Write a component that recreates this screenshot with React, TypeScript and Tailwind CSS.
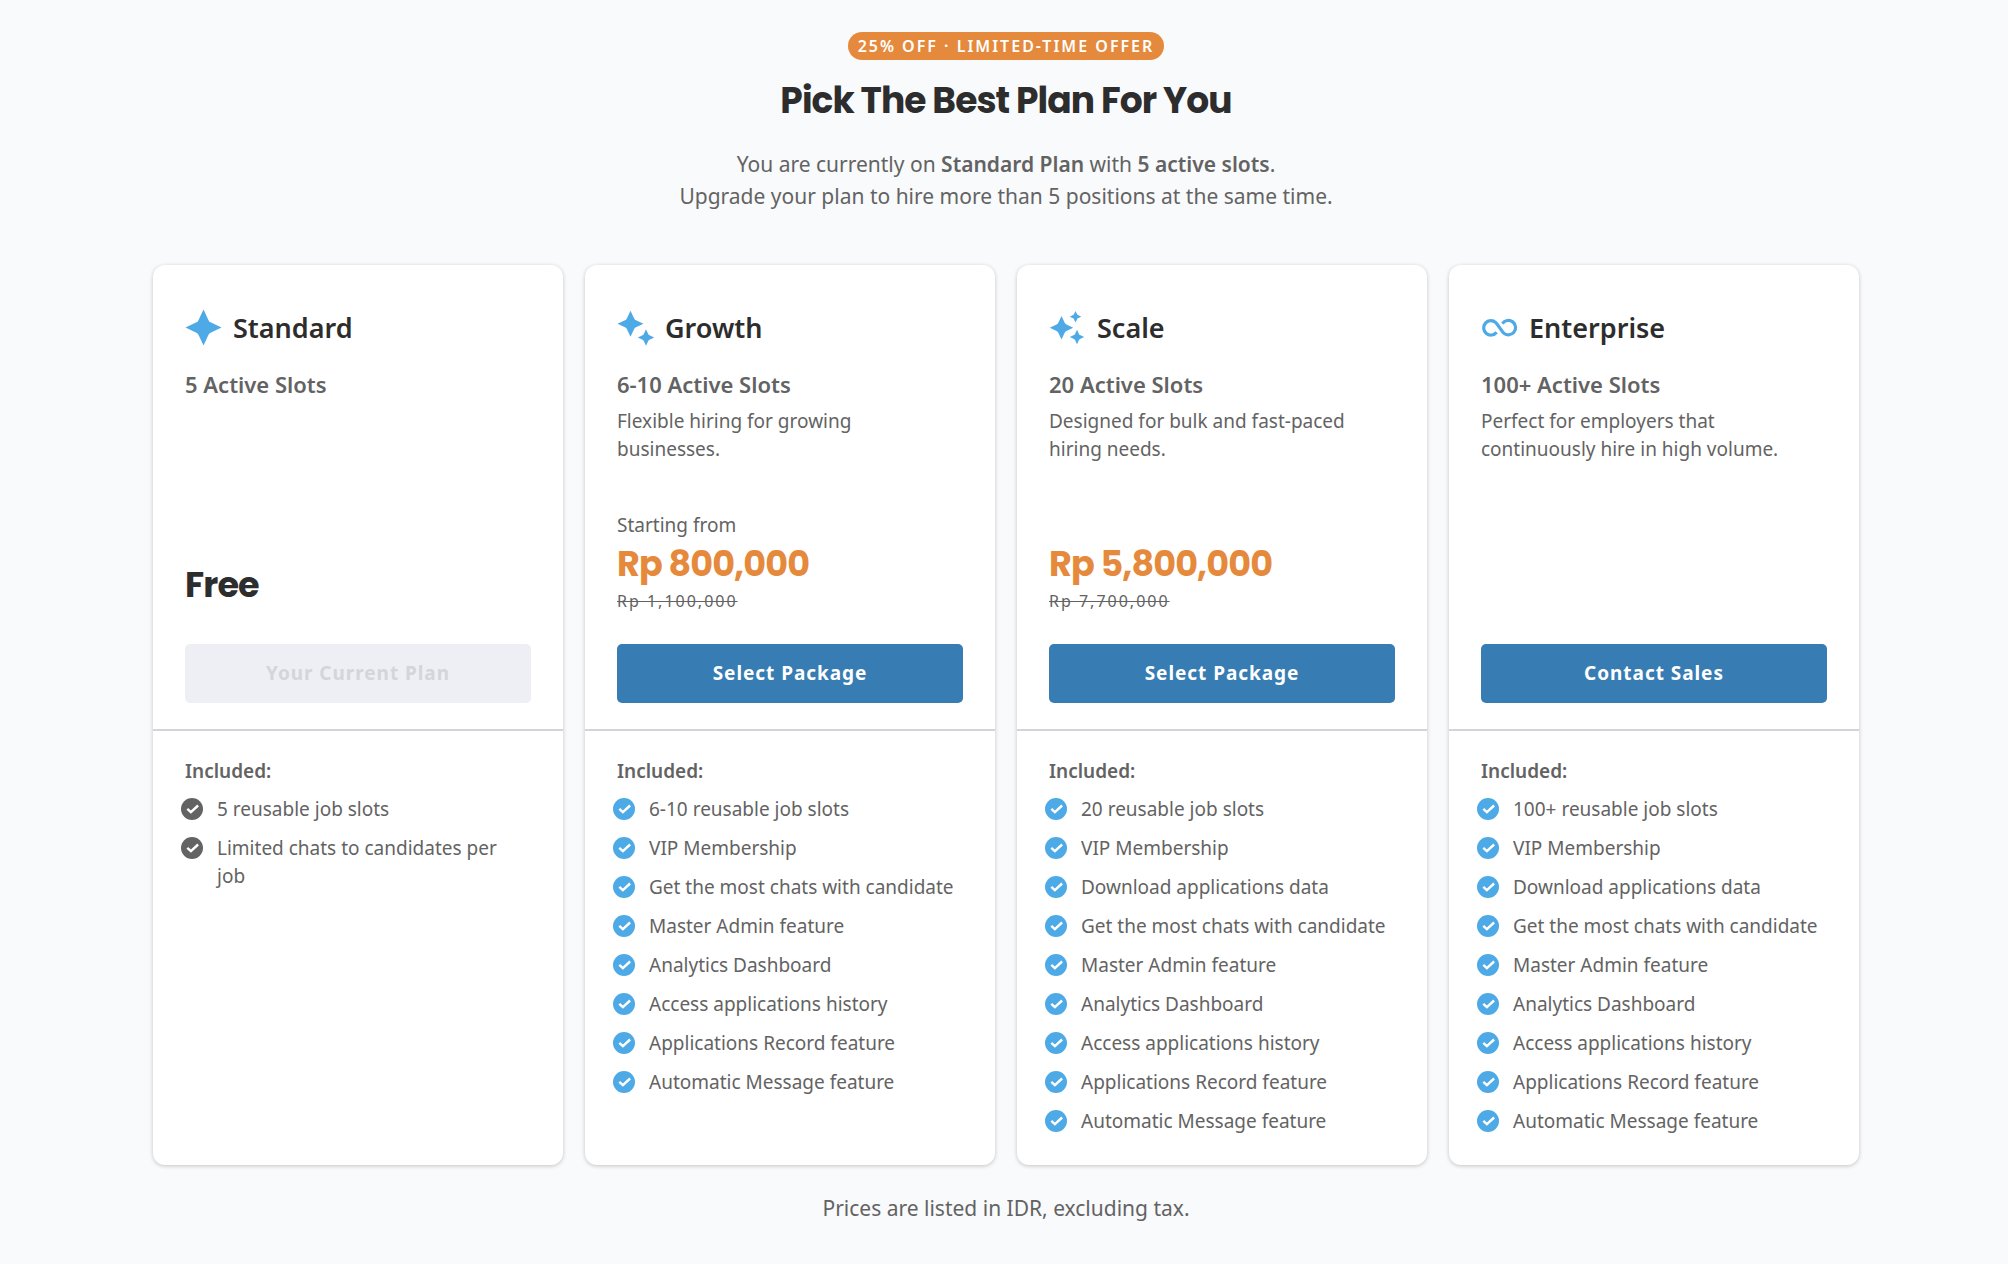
import type { ReactNode } from "react";

type StarProps = { cx: number; cy: number; r: number };

function Star({ cx, cy, r }: StarProps) {
  return (
    <path
      transform={`translate(${cx} ${cy}) scale(${r / 18})`}
      d="M0-18 4.9-7.6Q5.6-5.6 7.6-4.9L18 0 7.6 4.9Q5.6 5.6 4.9 7.6L0 18-4.9 7.6Q-5.6 5.6-7.6 4.9L-18 0-7.6-4.9Q-5.6-5.6-4.9-7.6Z"
    />
  );
}

function PlanIcon({ children }: { children: ReactNode }) {
  return (
    <svg viewBox="0 0 36 36" className="size-9 shrink-0 overflow-visible fill-[#4eaae6]" aria-hidden="true">
      {children}
    </svg>
  );
}

function CheckBadge({ muted }: { muted?: boolean }) {
  return (
    <svg
      viewBox="0 0 22 22"
      className={muted ? "size-[22px] fill-[#636363]" : "size-[22px] fill-[#4eaae6]"}
      aria-hidden="true"
    >
      <circle cx="11" cy="11" r="11" />
      <path d="M6.3 10.9 9.9 14.2 17.1 7.5" fill="none" stroke="#fff" strokeWidth="2.4" />
    </svg>
  );
}

type Plan = {
  name: string;
  icon: ReactNode;
  slots: string;
  description?: string;
  pricePrefix?: string;
  price?: string;
  oldPrice?: string;
  action: string;
  current?: boolean;
  included: string[];
};

const sharedFeatures = [
  "Get the most chats with candidate",
  "Master Admin feature",
  "Analytics Dashboard",
  "Access applications history",
  "Applications Record feature",
  "Automatic Message feature",
];

const plans: Plan[] = [
  {
    name: "Standard",
    icon: <Star cx={18.5} cy={17.5} r={18} />,
    slots: "5 Active Slots",
    price: "Free",
    action: "Your Current Plan",
    current: true,
    included: ["5 reusable job slots", "Limited chats to candidates per job"],
  },
  {
    name: "Growth",
    icon: (
      <>
        <Star cx={13.5} cy={13.7} r={13} />
        <Star cx={29} cy={27.5} r={8.2} />
      </>
    ),
    slots: "6-10 Active Slots",
    description: "Flexible hiring for growing businesses.",
    pricePrefix: "Starting from",
    price: "Rp 800,000",
    oldPrice: "Rp 1,100,000",
    action: "Select Package",
    included: ["6-10 reusable job slots", "VIP Membership", ...sharedFeatures],
  },
  {
    name: "Scale",
    icon: (
      <>
        <Star cx={12.5} cy={17.7} r={11.7} />
        <Star cx={26.5} cy={6.7} r={5.8} />
        <Star cx={28} cy={27} r={7.2} />
      </>
    ),
    slots: "20 Active Slots",
    description: "Designed for bulk and fast-paced hiring needs.",
    price: "Rp 5,800,000",
    oldPrice: "Rp 7,700,000",
    action: "Select Package",
    included: ["20 reusable job slots", "VIP Membership", "Download applications data", ...sharedFeatures],
  },
  {
    name: "Enterprise",
    icon: (
      <path
        d="M15.6 22.2A7.2 7.2 0 1 1 14.8 12.6C17.2 15 20 20.4 22.4 22.8A7.2 7.2 0 1 0 21.4 13.6"
        fill="none"
        stroke="#4eaae6"
        strokeWidth="3.2"
      />
    ),
    slots: "100+ Active Slots",
    description: "Perfect for employers that continuously hire in high volume.",
    action: "Contact Sales",
    included: ["100+ reusable job slots", "VIP Membership", "Download applications data", ...sharedFeatures],
  },
];

function PlanCard({ plan }: { plan: Plan }) {
  return (
    <article className="flex flex-col rounded-xl bg-white pb-[30px] shadow-[0_1px_4px_rgba(0,0,0,0.22)]">
      <div className="border-b-2 border-[#d3d3d9] px-8 pt-[45px] pb-[26px]">
        <div className="flex items-center gap-3">
          <PlanIcon>{plan.icon}</PlanIcon>
          <h2 className="text-[27px] leading-9 font-semibold text-[#2d2d2d]">{plan.name}</h2>
        </div>
        <p className="mt-[22px] text-[22px] leading-8 font-semibold">{plan.slots}</p>
        <p className="mt-[7px] min-h-24 pr-2 leading-7">{plan.description}</p>
        <div className="flex min-h-[110px] flex-col justify-end">
          {plan.pricePrefix && <p className="leading-7">{plan.pricePrefix}</p>}
          {plan.price && (
            <p
              className={
                plan.current
                  ? "pb-[3px] font-['Poppins','Inter',sans-serif] text-[35px] leading-[50px] font-bold tracking-tight text-[#2d2d2d]"
                  : "font-['Poppins','Inter',sans-serif] text-[35px] leading-[50px] font-bold tracking-tight text-[#e58a3c]"
              }
            >
              {plan.price}
            </p>
          )}
          {plan.oldPrice && (
            <p className="text-base leading-6 tracking-[2px]">
              <s>{plan.oldPrice}</s>
            </p>
          )}
        </div>
        <button
          type="button"
          disabled={plan.current}
          className="mt-[31px] h-[59px] w-full cursor-pointer rounded-[5px] bg-[#377cb3] font-bold tracking-wider text-white disabled:cursor-default disabled:bg-[#edeff4] disabled:text-[#d4d5da]"
        >
          {plan.action}
        </button>
      </div>
      <div className="px-8 pt-[26px]">
        <h3 className="leading-7 font-semibold">Included:</h3>
        <ul className="mt-[10px] flex flex-col gap-[11px] pr-1.5 leading-7">
          {plan.included.map((feature) => (
            <li key={feature} className="-ml-1 flex gap-[14px]">
              <span className="flex h-7 shrink-0 items-center">
                <CheckBadge muted={plan.current} />
              </span>
              {feature}
            </li>
          ))}
        </ul>
      </div>
    </article>
  );
}

export default function App() {
  return (
    <main className="min-h-screen bg-[#f9fafc] pt-8 pr-4 pb-8 pl-5 font-['Noto_Sans',sans-serif] text-[19px] text-[#636363]">
      <header className="flex flex-col items-center text-center">
        <p className="rounded-full bg-[#e58a3c] px-[10px] text-base leading-7 font-semibold tracking-[2px] text-white">
          25% OFF · LIMITED-TIME OFFER
        </p>
        <h1 className="mt-4 font-['Poppins','Inter',sans-serif] text-4xl leading-[50px] font-bold tracking-tight text-[#2d2d2d]">
          Pick The Best Plan For You
        </h1>
        <p className="mt-[22px] text-[21px] leading-8">
          You are currently on <strong className="font-semibold">Standard Plan</strong> with{" "}
          <strong className="font-semibold">5 active slots</strong>.
          <br />
          Upgrade your plan to hire more than 5 positions at the same time.
        </p>
      </header>
      <section
        aria-label="Plans"
        className="mx-auto mt-[53px] grid max-w-[1706px] grid-cols-1 gap-[22px] sm:grid-cols-2 xl:grid-cols-4"
      >
        {plans.map((plan) => (
          <PlanCard key={plan.name} plan={plan} />
        ))}
      </section>
      <p className="mt-[27px] text-center text-[21px] leading-8">Prices are listed in IDR, excluding tax.</p>
    </main>
  );
}
